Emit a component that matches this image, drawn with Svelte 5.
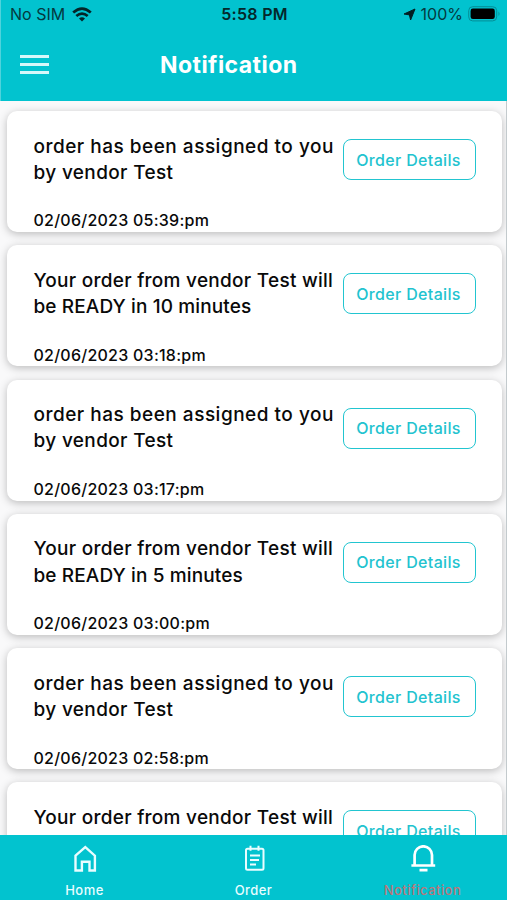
<script lang="ts">
  type Line = { text: string; spacing: number };
  type Notice = { lines: Line[]; date?: string };

  const assigned: Line[] = [
    { text: 'order has been assigned to you', spacing: 0.5 },
    { text: 'by vendor Test', spacing: 0.35 }
  ];

  function ready(minutes: number): Line[] {
    return [
      { text: 'Your order from vendor Test will', spacing: 0.27 },
      { text: `be READY in ${minutes} minutes`, spacing: 0.12 }
    ];
  }

  const notices: Notice[] = [
    { lines: assigned, date: '02/06/2023 05:39:pm' },
    { lines: ready(10), date: '02/06/2023 03:18:pm' },
    { lines: assigned, date: '02/06/2023 03:17:pm' },
    { lines: ready(5), date: '02/06/2023 03:00:pm' },
    { lines: assigned, date: '02/06/2023 02:58:pm' },
    { lines: ready(10).slice(0, 1) }
  ];
</script>

<div class="screen">
  <header>
    <div class="status">
      <div class="carrier">
        <span>No SIM</span>
        <svg width="20" height="15" viewBox="0 0 20 15" fill="none" stroke="#042629" stroke-width="2.7">
          <path d="M1.2 5.6Q10-2.2 18.8 5.6M4.3 9Q10 4.1 15.7 9" />
          <path d="M10 14.5l-3-3q3-2.4 6 0z" fill="#042629" stroke="none" />
        </svg>
      </div>
      <span class="clock">5:58 PM</span>
      <div class="power">
        <svg width="13" height="13" viewBox="0 0 13 13">
          <path d="M12 1L7.6 12 6.4 6.9 1 6z" fill="#021f22" stroke="#021f22" stroke-linejoin="round" />
        </svg>
        <span>100%</span>
        <svg width="33" height="16" viewBox="0 0 33 16">
          <rect x=".7" y=".7" width="28" height="14.2" rx="4" fill="none" stroke="#048e97" />
          <rect x="2.6" y="2.6" width="24.2" height="10.4" rx="2.3" fill="#000" />
          <path d="M30.5 5.5q2 2.3 0 4.6z" fill="#048e97" />
        </svg>
      </div>
    </div>
    <div class="toolbar">
      <button class="menu" aria-label="Menu"><i></i><i></i><i></i></button>
      <h1>Notification</h1>
    </div>
  </header>

  <main>
    {#each notices as notice}
      <article class="card">
        <div class="body">
          <p class="message">
            {#each notice.lines as line}
              <span style="letter-spacing: {line.spacing}px">{line.text}</span>
            {/each}
          </p>
          {#if notice.date}
            <time>{notice.date}</time>
          {/if}
        </div>
        <button class="details">Order Details</button>
      </article>
    {/each}
  </main>

  <nav>
    <a href="#home">
      <svg width="28" height="28" viewBox="0 0 28 28" fill="none" stroke="#e9fdff" stroke-width="2.4">
        <path d="M4.5 10.7L14.3 2.2l9.6 8.5v14.8h-5.4v-8.8h-7.6v8.8H4.5z" />
      </svg>
      <span>Home</span>
    </a>
    <a href="#order">
      <svg width="28" height="28" viewBox="0 0 28 28" fill="none" stroke="#e9fdff" stroke-width="2">
        <rect x="6" y="3.8" width="17.5" height="21" rx="1.5" />
        <path d="M10.5 .8v5M18.5 .8v5M10 10.5h10M10 15h9M10 19.5h6" />
      </svg>
      <span>Order</span>
    </a>
    <a href="#notification" class="active">
      <svg width="28" height="28" viewBox="0 0 28 28" fill="none" stroke="#fff" stroke-width="2.7">
        <path d="M5.6 20.5V10a8.7 8.7 0 0 1 17.4 0V20.5M2.4 20.5h23.8M10.5 25.2h8" />
      </svg>
      <span>Notification</span>
    </a>
  </nav>
</div>

<style>
  :global(body) {
    overflow: hidden;
  }

  .screen {
    display: flex;
    flex-direction: column;
    width: 507px;
    height: 900px;
    overflow: hidden;
    background: #f9f9fa;
    font-family: Inter, 'Open Sans', sans-serif;
    color: #090909;
  }

  header {
    flex: none;
    box-sizing: border-box;
    height: 100.5px;
    border-left: 1.5px solid #4fd3dc;
    background: #02c3cf;
  }

  .status {
    display: grid;
    grid-template-columns: 1fr auto 1fr;
    align-items: center;
    height: 28px;
    padding: 0 6px 0 9px;
    font-size: 16px;
    line-height: 1;
    color: #043a3f;
  }

  .carrier,
  .power {
    display: flex;
    align-items: center;
    gap: 7px;
  }

  .power {
    justify-content: flex-end;
    gap: 5px;
  }

  .clock {
    margin-left: -2px;
    font-weight: 600;
    letter-spacing: 0.3px;
    color: #04282b;
  }

  .toolbar {
    display: flex;
    align-items: center;
    height: 72px;
    padding-left: 19px;
  }

  button {
    font-family: inherit;
    background: none;
    cursor: pointer;
  }

  .menu {
    display: flex;
    flex-direction: column;
    gap: 5px;
    width: 29px;
    padding: 0;
    border: none;
  }

  .menu i {
    height: 3px;
    background: #d5f8fa;
  }

  h1 {
    margin: 1px 0 0 111px;
    font-size: 23px;
    font-weight: 700;
    line-height: 30px;
    letter-spacing: 0.45px;
    color: #fff;
  }

  main {
    flex: 1;
    min-height: 0;
    display: flex;
    flex-direction: column;
    gap: 13.3px;
    padding: 10.5px 4px 0 7px;
    border-right: 1px solid #c3cacd;
    overflow: hidden;
  }

  .card {
    flex: none;
    display: flex;
    justify-content: space-between;
    align-items: flex-start;
    box-sizing: border-box;
    height: 121px;
    padding: 22.5px 26px 0 26.5px;
    border-radius: 10px;
    background: #fff;
    box-shadow: 0 2px 8px rgba(0, 0, 0, 0.25);
  }

  .message {
    margin: 0;
    font-size: 19px;
    font-weight: 500;
    line-height: 26.3px;
  }

  .message span {
    display: block;
    white-space: nowrap;
  }

  .body {
    width: 304px;
  }

  time {
    display: block;
    margin-top: 21.3px;
    font-size: 16px;
    font-weight: 500;
    line-height: 26px;
    letter-spacing: 0.25px;
    white-space: nowrap;
  }

  .details {
    flex: none;
    box-sizing: border-box;
    width: 133px;
    height: 41px;
    margin-top: 5.5px;
    padding: 0 2px 0 0;
    border: 1.5px solid #22c5d0;
    border-radius: 8px;
    font-size: 16px;
    font-weight: 500;
    letter-spacing: 0.35px;
    white-space: nowrap;
    color: #22c3cf;
  }

  nav {
    flex: none;
    display: grid;
    grid-template-columns: repeat(3, 1fr);
    height: 65px;
    background: #02c3cf;
  }

  nav a {
    display: flex;
    flex-direction: column;
    align-items: center;
    padding-top: 10px;
    font-size: 13px;
    font-weight: 500;
    line-height: 16px;
    letter-spacing: 0.45px;
    color: #e9fdff;
    text-decoration: none;
  }

  nav span {
    margin-top: 9px;
  }

  nav .active {
    color: #b9777b;
  }
</style>
